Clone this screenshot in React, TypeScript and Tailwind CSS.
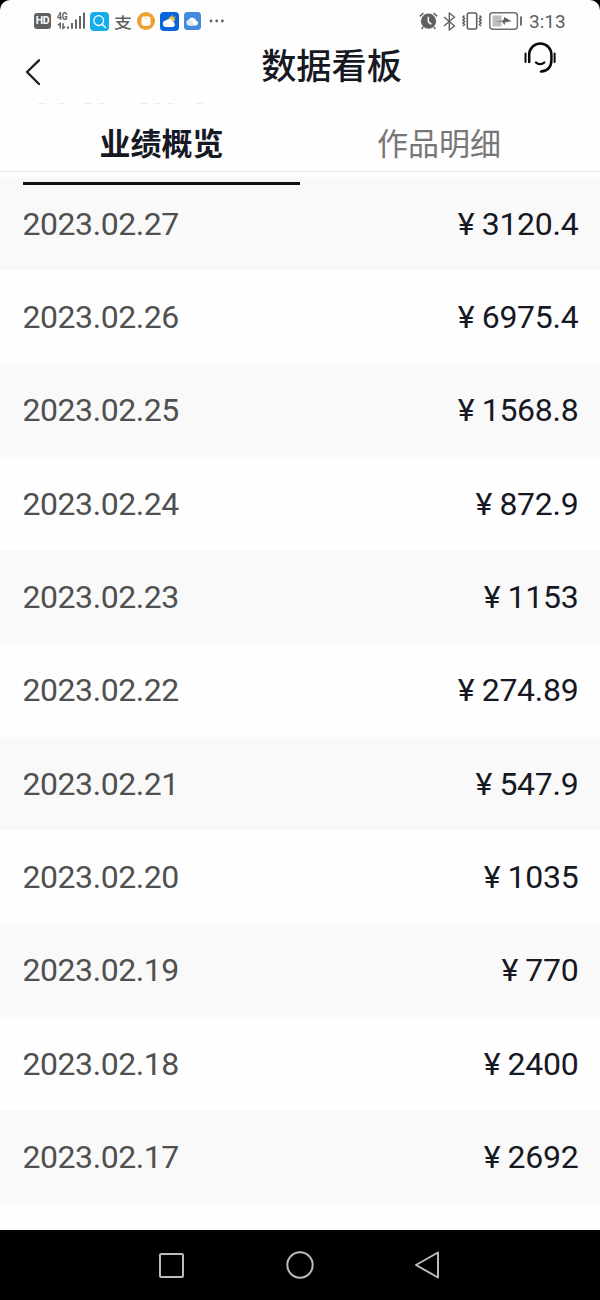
import clsx from "clsx";

const records = [
  { date: "2023.02.27", amount: "3120.4" },
  { date: "2023.02.26", amount: "6975.4" },
  { date: "2023.02.25", amount: "1568.8" },
  { date: "2023.02.24", amount: "872.9" },
  { date: "2023.02.23", amount: "1153" },
  { date: "2023.02.22", amount: "274.89" },
  { date: "2023.02.21", amount: "547.9" },
  { date: "2023.02.20", amount: "1035" },
  { date: "2023.02.19", amount: "770" },
  { date: "2023.02.18", amount: "2400" },
  { date: "2023.02.17", amount: "2692" },
];

function SignalIcon() {
  return (
    <div className="relative ml-[6px] h-[18px] w-7">
      <span className="absolute top-0 left-0 origin-left scale-x-85 text-[10px] leading-[9px] font-bold tracking-tight">4G</span>
      <svg className="absolute inset-0" width="28" height="18" viewBox="0 0 28 18" fill="none" stroke="#606060">
        <path d="M3.2 16.5v-5L1 13.2M6 11.2v5l2-1.6" strokeWidth="1.5" />
        <path d="M11 14.5v2.3M15 11v5.8M19 7.5v9.3M23 4v12.8M27 .5v16.3" strokeWidth="1.9" />
      </svg>
    </div>
  );
}

function StatusBar() {
  return (
    <div className="flex h-[42px] items-center justify-between pr-[34px] pl-[34px] text-[#606060]">
      <div className="flex items-center">
        <span className="flex h-4 w-[17px] items-center justify-center rounded-[3px] bg-[#606060] text-[10.5px] font-bold tracking-tight text-white">
          HD
        </span>
        <SignalIcon />
        <svg className="ml-[5px]" width="19" height="19" viewBox="0 0 19 19" fill="none">
          <rect width="19" height="19" rx="4" fill="#13aeea" />
          <circle cx="8.7" cy="8.6" r="4.9" stroke="#fff" strokeWidth="1.3" />
          <path d="m12.2 12.2 3.3 3.3" stroke="#fff" strokeWidth="1.4" strokeLinecap="round" />
        </svg>
        <span className="ml-[5px] w-[18px] origin-center scale-y-85 font-['Noto_Sans_CJK_SC',sans-serif] text-[18px] leading-[18px] font-medium">支</span>
        <svg className="ml-[5px]" width="18" height="18" viewBox="0 0 18 18">
          <circle cx="9" cy="9" r="9" fill="#eda02f" />
          <rect x="4.5" y="4.5" width="9" height="9.3" rx="2" fill="#fff" />
          <path d="M7 6.5h4.5M11 11v1" stroke="#f7d5a5" strokeWidth="1" />
        </svg>
        <svg className="ml-[5px]" width="19" height="19" viewBox="0 0 19 19">
          <rect width="19" height="19" rx="4" fill="#0866dc" />
          <circle cx="11.8" cy="7.2" r="3" fill="#f5c54b" />
          <path d="M12.5 3.6v-.9M15.3 5l.7-.6" stroke="#f5c54b" />
          <path d="M6.3 15a3.2 3.2 0 0 1-.4-6.4 4 4 0 0 1 7 1.2 2.7 2.7 0 0 1 0 5.2Z" fill="#fff" />
        </svg>
        <svg className="ml-[5px]" width="17" height="18" viewBox="0 0 17 18">
          <rect width="17" height="18" rx="3.5" fill="#438bdc" />
          <path d="M5 13.4a2.9 2.9 0 0 1-.2-5.7 4 4 0 0 1 7.4 1 2.4 2.4 0 0 1 0 4.7Z" fill="#fff" />
          <path d="M5 13.4a2.9 2.9 0 0 1-.1-5.7A4 4 0 0 1 9 11l2.5 2.4Z" fill="#dbeafa" />
        </svg>
        <svg className="ml-2" width="15" height="4" viewBox="0 0 15 4" fill="#606060">
          <circle cx="2" cy="2" r="1.4" />
          <circle cx="7.7" cy="2" r="1.4" />
          <circle cx="13.4" cy="2" r="1.4" />
        </svg>
      </div>

      <div className="flex items-center">
        <svg width="19" height="18" viewBox="0 0 19 18" fill="none">
          <circle cx="9.5" cy="9.2" r="7.6" fill="#606060" />
          <path d="M.8 4.4 4.4 1M14.6 1l3.6 3.4M4.2 15l-1.6 2M14.8 15l1.6 2" stroke="#606060" strokeWidth="1.5" />
          <path d="M9.3 4.8v4.8l3 2.8" stroke="#fff" strokeWidth="1.5" />
        </svg>
        <svg className="ml-[5px]" width="13" height="19" viewBox="0 0 13 19" fill="none" stroke="#606060" strokeWidth="1.4">
          <path d="m1 5 10.5 9-5.2 4V1l5.2 4L1 14" strokeLinejoin="round" />
        </svg>
        <svg className="ml-[5px]" width="22" height="18" viewBox="0 0 22 18" fill="none" stroke="#606060" strokeWidth="1.6">
          <rect x="6.3" y="1" width="9.4" height="16" rx="1.5" />
          <path d="M3.5 3.5 2 5l1.5 1.5L2 8l1.5 1.5L2 11l1.5 1.5L2 14M18.5 3.5 20 5l-1.5 1.5L20 8l-1.5 1.5L20 11l-1.5 1.5L20 14" />
        </svg>
        <svg className="ml-[6px]" width="34" height="18" viewBox="0 0 34 18" fill="none">
          <rect x=".8" y=".8" width="27.6" height="16.4" rx="3" stroke="#707070" strokeWidth="1.5" />
          <rect x="3.5" y="3.5" width="9" height="11" fill="#bdbdbd" />
          <path d="m6.5 9.5 8-1.2.7-3.3 7.5 4.3-6.5 1-.8 3-2.2-3.7Z" fill="#606060" />
          <path d="M32 4.5v9" stroke="#606060" strokeWidth="1.8" />
        </svg>
        <span className="mt-px ml-[6px] w-[37px] text-[19px] leading-5 whitespace-nowrap">3:13</span>
      </div>
    </div>
  );
}

function Header() {
  return (
    <header className="relative flex h-[61px] justify-between pr-[43px] pl-6 text-[#161823]">
      <svg className="mt-4" width="18" height="28" viewBox="0 0 18 28" fill="none">
        <path d="M15 2.3 3 14l12 12" stroke="#202126" strokeWidth="2.4" strokeLinecap="round" strokeLinejoin="round" />
      </svg>
      <h1 className="absolute inset-x-0 top-0 pl-[63px] text-center font-['Noto_Sans_CJK_SC',sans-serif] text-[35.2px] leading-[44px] font-medium">
        数据看板
      </h1>
      <svg width="34" height="32" viewBox="0 0 34 32" fill="none" stroke="#090909" strokeLinecap="round">
        <path d="M6.2 20V12.6a11.1 11.1 0 0 1 22.2 0V18c0 7-3.8 11-10.4 11.6" strokeWidth="2.5" />
        <path d="M2.5 11.5v8.5M31.6 11.5v8.5" strokeWidth="2" />
        <path d="M13 20.5c2.2 2.2 6 2.2 8.3 0" strokeWidth="2.3" />
      </svg>
      {/* sliver of the content scrolled under the title */}
      <svg className="absolute -bottom-px left-[38px]" width="168" height="1" viewBox="0 0 168 1">
        <path d="M0 .5h8M20 .5h6M46 .5h8M60 .5h7M102 .5h8M116 .5h7M130 .5h6M158 .5h7" stroke="#ececec" />
      </svg>
    </header>
  );
}

export default function App() {
  return (
    <div className="h-[1300px] w-[600px] overflow-hidden bg-black font-[Roboto,'Noto_Sans_CJK_SC',sans-serif]">
      <div className="flex h-[1230px] flex-col overflow-hidden rounded-t-[10px] bg-[#fefefe]">
        <StatusBar />
        <Header />

        <nav className="relative grid h-[69px] shrink-0 grid-cols-2 border-b border-[#e8e8e8] px-[23px] font-['Noto_Sans_CJK_SC',sans-serif] text-[31px] leading-[78px]">
          <div className="text-center font-bold text-[#161823]">业绩概览</div>
          <div className="pl-px text-center text-[#777]">作品明细</div>
          <span className="absolute top-[78.5px] left-[23px] h-[3px] w-[277px] bg-[#101116]" />
        </nav>

        <div className="mt-[4.7px] grid h-[1026.6px] shrink-0 grid-rows-11">
          {records.map((item, i) => (
            <div
              key={item.date}
              className={clsx(
                "flex items-center justify-between pt-px pr-[21.5px] pl-[22.5px] text-[32px] leading-10",
                i % 2 === 0 && "bg-[#f9f9f9]"
              )}
            >
              <span className="tracking-[-0.45px] text-[#505050]">{item.date}</span>
              <span className="flex gap-[7px] text-[#161823]">
                <span>¥</span>
                <span className="tracking-[-0.25px]">{item.amount}</span>
              </span>
            </div>
          ))}
        </div>
      </div>

      <div className="flex h-[70px] items-center justify-between pr-[160px] pl-[158px]">
        <svg width="27" height="27" viewBox="0 0 27 27" fill="none" stroke="#bcbcbc" strokeWidth="2">
          <rect x="2" y="2" width="23" height="23" rx="1" />
        </svg>
        <svg width="30" height="30" viewBox="0 0 30 30" fill="none" stroke="#bcbcbc" strokeWidth="2">
          <circle cx="15" cy="15" r="12.7" />
        </svg>
        <svg width="26" height="30" viewBox="0 0 26 30" fill="none" stroke="#bcbcbc" strokeWidth="2" strokeLinejoin="round">
          <path d="M24 2.5v25L2 15Z" />
        </svg>
      </div>
    </div>
  );
}
